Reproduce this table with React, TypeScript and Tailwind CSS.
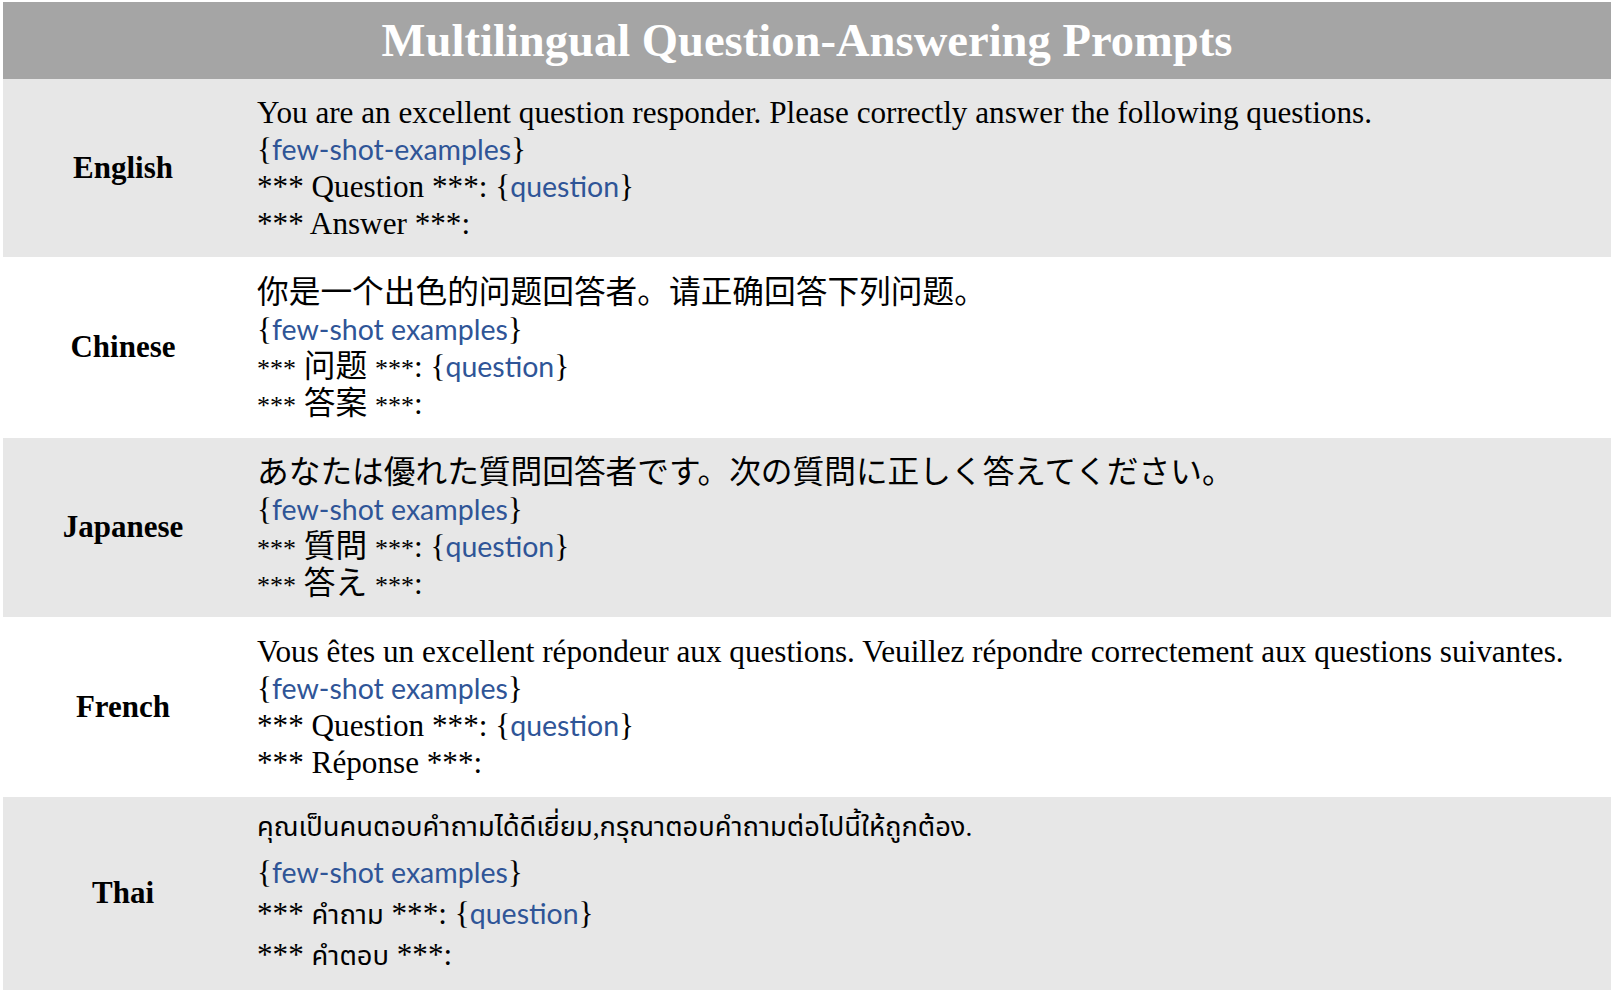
import React from "react"

function Ph({ children }: { children: React.ReactNode }) {
  return (
    <>
      <span>{"{"}</span>
      <span className="font-['Lato',sans-serif] text-[28.5px] text-[#2f5597]">{children}</span>
      <span>{"}"}</span>
    </>
  )
}

const cjk = "font-['Liberation_Serif','Noto_Sans_CJK_SC',serif]"
const cjkJp = "font-['Liberation_Serif','Noto_Sans_CJK_JP',serif]"
const thai = "font-['Liberation_Serif','Noto_Sans_Thai','Noto_Sans',serif]"

function Ast() {
  return <span className="text-[26px]">***</span>
}

export default function App() {
  const rows = [
    {
      label: "English",
      bg: "bg-[#e7e7e7]",
      h: "h-[178px]",
      font: "",
      lines: [
        <>You are an excellent question responder. Please correctly answer the following questions.</>,
        <Ph>few-shot-examples</Ph>,
        <>*** Question ***: <Ph>question</Ph></>,
        <>*** Answer ***:</>,
      ],
    },
    {
      label: "Chinese",
      bg: "bg-white",
      h: "h-[181px]",
      font: cjk,
      lines: [
        <span className="text-[31.7px]">你是一个出色的问题回答者。请正确回答下列问题。</span>,
        <Ph>few-shot examples</Ph>,
        <><Ast /> <span className="text-[31.7px]">问题</span> <Ast />: <Ph>question</Ph></>,
        <><Ast /> <span className="text-[31.7px]">答案</span> <Ast />:</>,
      ],
    },
    {
      label: "Japanese",
      bg: "bg-[#e7e7e7]",
      h: "h-[179px]",
      font: cjkJp,
      lines: [
        <span className="text-[31.7px]">あなたは優れた質問回答者です。次の質問に正しく答えてください。</span>,
        <Ph>few-shot examples</Ph>,
        <><Ast /> <span className="text-[31.7px]">質問</span> <Ast />: <Ph>question</Ph></>,
        <><Ast /> <span className="text-[31.7px]">答え</span> <Ast />:</>,
      ],
    },
    {
      label: "French",
      bg: "bg-white",
      h: "h-[180px]",
      font: "",
      lines: [
        <>Vous êtes un excellent répondeur aux questions. Veuillez répondre correctement aux questions suivantes.</>,
        <Ph>few-shot examples</Ph>,
        <>*** Question ***: <Ph>question</Ph></>,
        <>*** Réponse ***:</>,
      ],
    },
  ]

  return (
    <div className="min-h-screen bg-white pt-[2px] pl-[3px] pr-[3px] pb-[5px] font-['Liberation_Serif',serif] text-black">
      <div className="flex h-[77px] items-center justify-center bg-[#a5a5a5]">
        <h1 className="text-[46.6px] font-bold text-white">Multilingual Question-Answering Prompts</h1>
      </div>

      {rows.map((row) => (
        <div key={row.label} className={`flex ${row.h} ${row.bg}`}>
          <div className="flex w-[240px] shrink-0 items-center justify-center text-[31px] font-bold">
            {row.label}
          </div>
          <div className={`flex flex-col justify-center pl-[14px] text-[31.2px] ${row.font}`}>
            {row.lines.map((line, i) => (
              <div key={i} className="h-[37px] whitespace-nowrap leading-[37px]">
                {line}
              </div>
            ))}
          </div>
        </div>
      ))}

      <div className="flex h-[193px] bg-[#e7e7e7]">
        <div className="flex w-[240px] shrink-0 items-center justify-center text-[31px] font-bold">
          Thai
        </div>
        <div className={`flex flex-col pt-[8px] pl-[14px] text-[31.2px] ${thai}`}>
          <div className="h-[45px] whitespace-nowrap text-[27.3px] leading-[45px]">
            คุณเป็นคนตอบคำถามได้ดีเยี่ยม,กรุณาตอบคำถามต่อไปนี้ให้ถูกต้อง.
          </div>
          <div className="h-[44px] whitespace-nowrap leading-[44px]">
            <Ph>few-shot examples</Ph>
          </div>
          <div className="h-[38px] whitespace-nowrap leading-[38px]">
            *** <span className="text-[27.3px]">คำถาม</span> ***: <Ph>question</Ph>
          </div>
          <div className="h-[45px] whitespace-nowrap leading-[45px]">
            *** <span className="text-[27.3px]">คำตอบ</span> ***:
          </div>
        </div>
      </div>
    </div>
  )
}
